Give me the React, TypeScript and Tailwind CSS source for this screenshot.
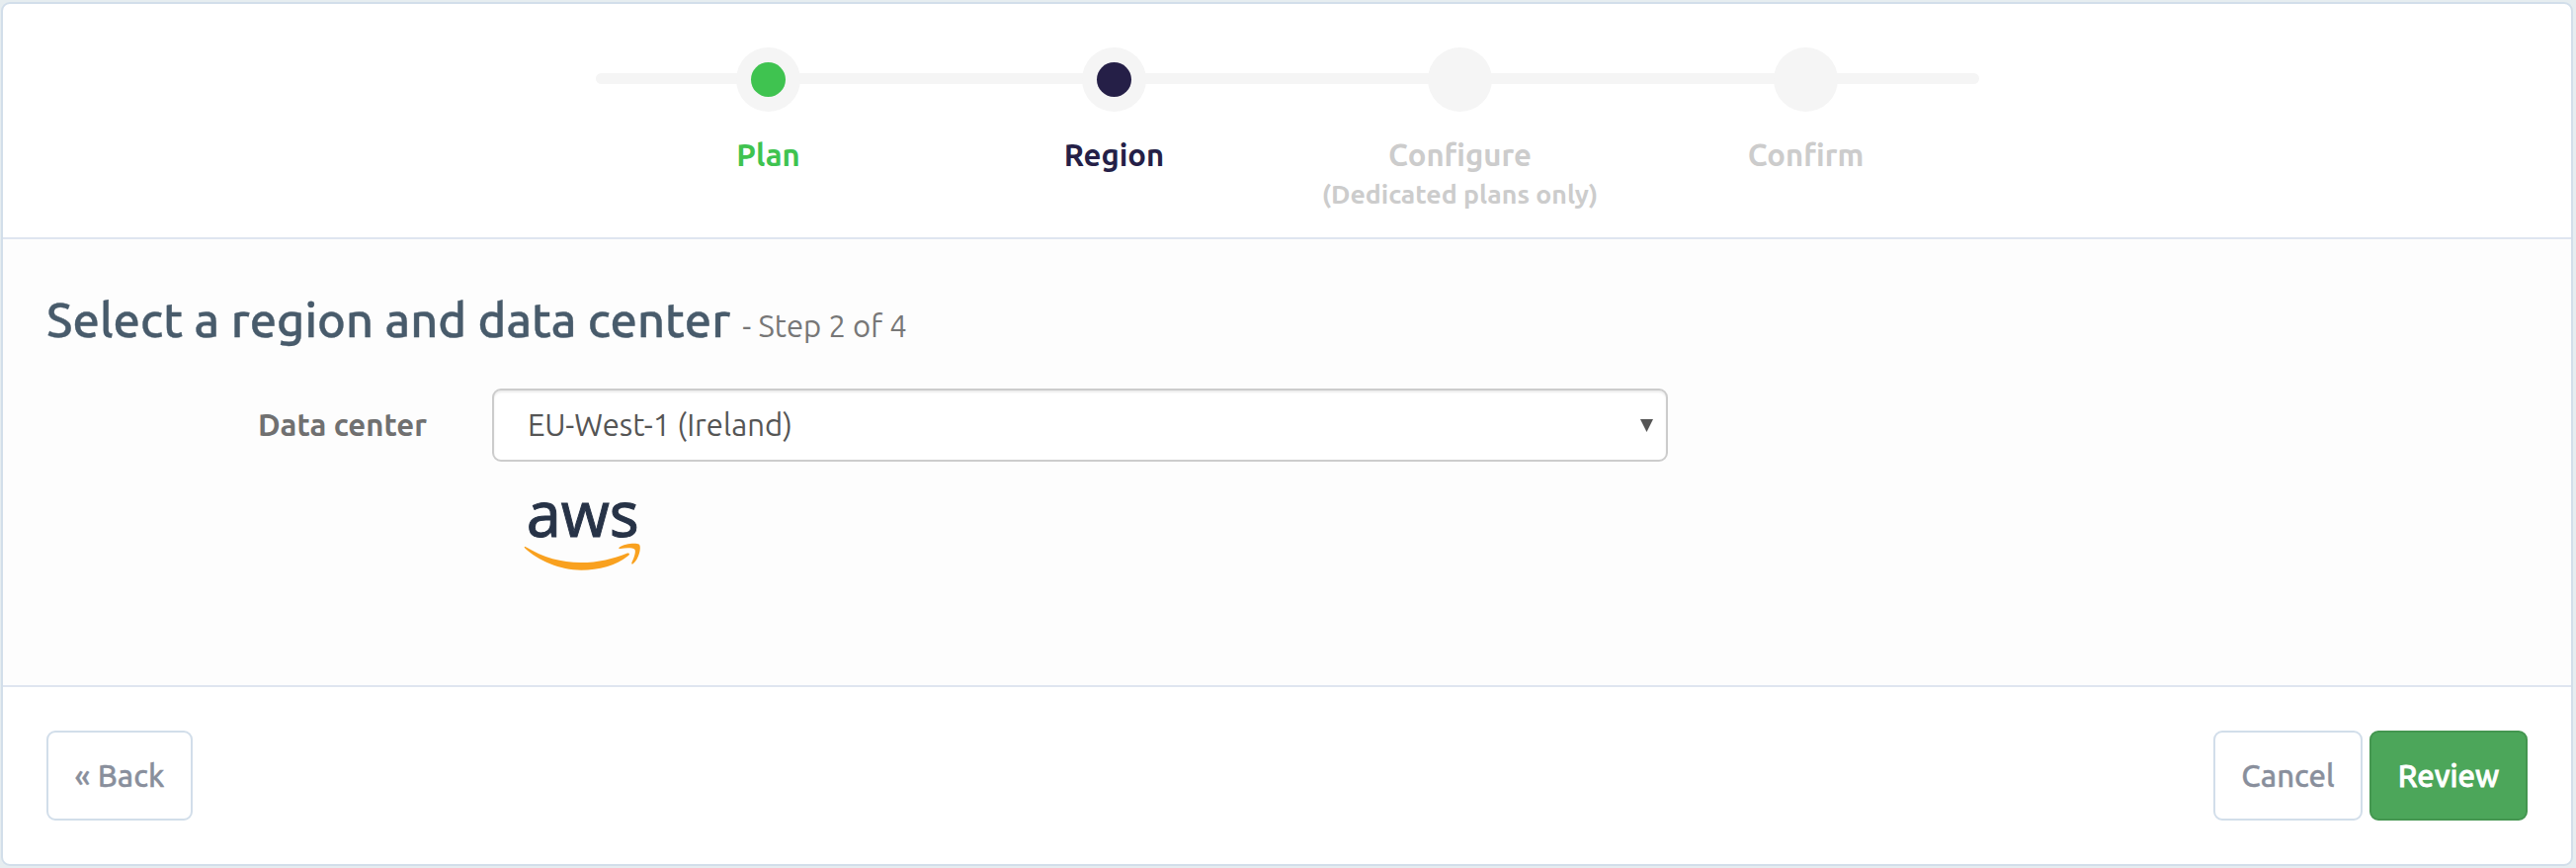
type Step = { label: string; note?: string; dot?: string; text: string };

const steps: Step[] = [
  { label: "Plan", dot: "bg-[#3fc350]", text: "text-[#3fc350]" },
  { label: "Region", dot: "bg-[#251f47]", text: "text-[#251f47]" },
  { label: "Configure", note: "(Dedicated plans only)", text: "text-[#cccccc]" },
  { label: "Confirm", text: "text-[#cccccc]" },
];

function Stepper() {
  return (
    <header className="flex h-[236px] shrink-0 justify-center pt-11">
      <div className="grid h-[180px] w-[1400px] grid-cols-4">
        <div className="z-0 col-span-4 col-start-1 row-start-1 mt-[26px] h-[11px] rounded-full bg-[#f5f5f5]" />
        {steps.map((s, i) => (
          <div
            key={s.label}
            className="z-10 row-start-1 flex flex-col items-center whitespace-nowrap"
            style={{ gridColumnStart: i + 1 }}
          >
            <div className="flex size-[65px] items-center justify-center rounded-full bg-[#f5f5f5]">
              {s.dot && <div className={`size-[35px] rounded-full ${s.dot}`} />}
            </div>
            <div className={`mt-[26px] text-[31.1px] leading-[35px] font-bold ${s.text}`}>{s.label}</div>
            {s.note && <div className={`mt-1 text-[26.67px] leading-[36px] font-bold ${s.text}`}>{s.note}</div>}
          </div>
        ))}
      </div>
    </header>
  );
}

function AwsLogo() {
  return (
    <svg className="mt-1 ml-8 block h-[109px] w-[120px]" viewBox="90 -26 360 327">
      <text
        x="98"
        y="189"
        textLength="342"
        lengthAdjust="spacingAndGlyphs"
        fill="#273347"
        stroke="#273347"
        strokeWidth="3"
        fontSize="194"
        fontFamily='"Noto Sans", sans-serif'
      >
        aws
      </text>
      <g fill="#f9a11f">
        <path d="M95 220C150 253 205 268 262 268C318 268 362 256 403 240C411 238 414 243 407 248C370 278 318 291 265 291C200 291 135 263 93 224C91 221 92 219 95 220Z" />
        <path d="M380 222C395 211 430 207 441 213C448 221 440 258 422 272C417 275 417 270 419 266C427 248 431 233 427 228C421 223 401 223 384 226C379 226 377 224 380 222Z" />
      </g>
    </svg>
  );
}

export default function App() {
  return (
    <div className="flex h-[878px] w-full bg-[#e6edf0] pt-0.5 pr-[3px] pb-0.5 pl-px font-['Ubuntu','Noto_Sans',sans-serif]">
      <div className="flex grow flex-col overflow-hidden rounded-[9px] border-2 border-[#d2deea] bg-white">
        <Stepper />
        <main className="grow border-y-2 border-[#dfe5f0] bg-[#fdfdfd] px-11 pt-[51px]">
          <h1 className="flex items-baseline gap-3 text-[48.8px] leading-[60px] font-medium text-[#485b6b] [-webkit-text-stroke:0.4px_#485b6b]">
            Select a region and data center
            <small className="text-[31.1px] leading-none font-normal text-[#777777] [-webkit-text-stroke:0]">
              - Step 2 of 4
            </small>
          </h1>
          <div className="mt-10 flex">
            <div className="flex h-[74px] w-[385px] shrink-0 items-center justify-end text-[31.1px] font-bold text-[#707070]">
              Data center
            </div>
            <div className="ml-[66px] w-[1190px]">
              <div className="flex h-[74px] items-center justify-between rounded-[9px] border-2 border-[#cccccc] bg-white pr-[13px] pl-[34px] text-[31.1px] text-[#555555] shadow-[inset_0_2px_2px_rgba(0,0,0,0.075)]">
                EU-West-1 (Ireland)
                <svg className="h-[13px] w-[13px]" viewBox="0 0 13 13">
                  <path d="M0 0H13L6.5 13Z" fill="#555555" />
                </svg>
              </div>
              <AwsLogo />
            </div>
          </div>
        </main>
        <footer className="flex h-[179px] shrink-0 items-start justify-between px-11 pt-11 text-[31.1px] font-medium">
          <button className="h-[91px] w-[148px] rounded-[9px] border-2 border-[#d2deea] bg-white pt-0.5 text-[#898f9c] [-webkit-text-stroke:0.3px_#898f9c]">
            « Back
          </button>
          <div className="flex gap-[7px]">
            <button className="h-[91px] w-[151px] rounded-[9px] border-2 border-[#d2deea] bg-white pt-0.5 text-[#898f9c] [-webkit-text-stroke:0.3px_#898f9c]">
              Cancel
            </button>
            <button className="h-[91px] w-[160px] rounded-[9px] border-2 border-[#449650] bg-[#4ca65a] pt-0.5 text-white [-webkit-text-stroke:0.8px_#ffffff]">
              Review
            </button>
          </div>
        </footer>
      </div>
    </div>
  );
}
